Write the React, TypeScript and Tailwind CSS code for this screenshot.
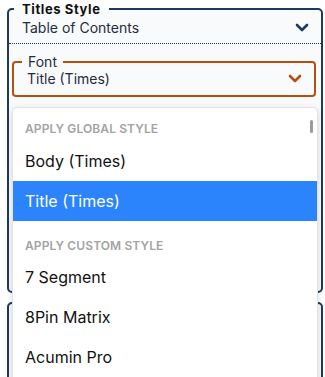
import React from "react";

function Chevron({ color }: { color: string }) {
  return (
    <svg width="14" height="9" viewBox="0 0 14 9" fill="none">
      <path d="M2 2l5 5 5-5" stroke={color} strokeWidth="2.6" strokeLinecap="round" strokeLinejoin="round" />
    </svg>
  );
}

export default function App() {
  const font = { fontFamily: "Inter, 'Noto Sans', sans-serif" };
  return (
    <div className="relative w-[325px] h-[377px] overflow-hidden bg-white" style={font}>
      <fieldset className="ml-[7px] mt-[1px] w-[316px] h-[292px] border-2 border-[#1c3a5c] rounded-[5px] bg-[#f9fafb] px-0">
        <legend className="ml-[5px] px-[8px] text-[13px] leading-[16px] font-bold tracking-[0.6px] text-[#111]">
          Titles Style
        </legend>
        <div className="flex items-center justify-between pl-[13px] pr-[12px] h-[18px] mt-[1px]">
          <span className="text-[14px] text-[#1f2d3d]">Table of Contents</span>
          <Chevron color="#1c3a5c" />
        </div>
        <div className="mt-[7px] border-t border-dotted border-[#1c3a5c]" />
        <fieldset className="mt-[10px] ml-[3px] w-[304px] h-[43px] border-2 border-[#b5510f] rounded-[4px] px-0">
          <legend className="ml-[8px] px-[6px] text-[14px] leading-[16px] text-[#1f2d3d]">Font</legend>
          <div className="flex items-center justify-between pl-[13px] pr-[12px] h-[18px] -mt-[1px]">
            <span className="text-[14px] text-[#1f2d3d]">Title (Times)</span>
            <Chevron color="#b5510f" />
          </div>
        </fieldset>
      </fieldset>
      <div className="ml-[7px] mt-[9px] w-[316px] h-[100px] border-2 border-[#1c3a5c] rounded-[5px] bg-[#f9fafb]" />

      <div className="absolute left-[12px] top-[107px] w-[306px] h-[290px] bg-white border border-[#e2e4e8] rounded-t-[5px] shadow-[0_2px_6px_rgba(0,0,0,0.15)]">
        <div className="absolute right-[4px] top-[12px] w-[3px] h-[13px] rounded-full bg-[#9a9a9a]" />
        <div className="pl-[12px] pt-[14px] pb-[5px] text-[12px] leading-[14px] font-semibold text-[#a3a3a3] tracking-[0.1px]">
          APPLY GLOBAL STYLE
        </div>
        <div className="h-[40px] flex items-center pl-[12px] text-[16px] text-[#111]">Body (Times)</div>
        <div className="h-[40px] flex items-center pl-[12px] text-[16px] text-white bg-[#2b84fb]">Title (Times)</div>
        <div className="pl-[12px] pt-[18px] pb-[4px] text-[12px] leading-[14px] font-semibold text-[#a3a3a3] tracking-[0.1px]">
          APPLY CUSTOM STYLE
        </div>
        <div className="h-[40px] flex items-center pl-[12px] text-[16px] text-[#111]">7 Segment</div>
        <div className="h-[40px] flex items-center pl-[12px] text-[16px] text-[#111]">8Pin Matrix</div>
        <div className="h-[40px] flex items-center pl-[12px] text-[16px] text-[#111]">Acumin Pro</div>
      </div>
    </div>
  );
}
